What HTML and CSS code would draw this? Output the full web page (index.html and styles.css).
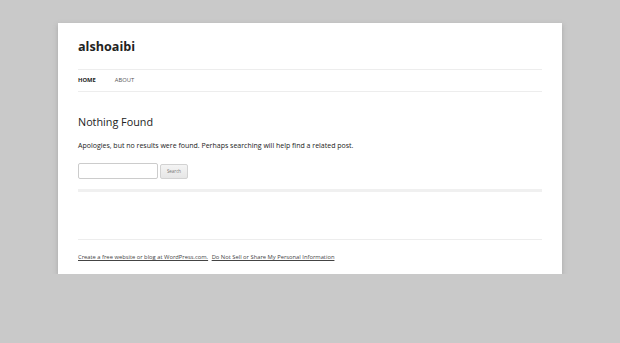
FILE: index.html
```html
<!DOCTYPE html>
<html lang="en">
<head>
    <meta charset="UTF-8">
    <meta name="viewport" content="width=device-width, initial-scale=1.0">
    <title>alshoaibi</title>
    <link rel="stylesheet" href="styles.css">
</head>
<body>

    <div class="site">
        <!-- Header and Navigation -->
        <header class="site-header">
            <h1 class="site-title"><a href="#">alshoaibi</a></h1>
            <nav class="main-nav">
                <ul>
                    <li class="current"><a href="#">Home</a></li>
                    <li><a href="#">About</a></li>
                </ul>
            </nav>
        </header>

        <!-- Content -->
        <main class="site-content">
            <article class="not-found">
                <h2 class="entry-title">Nothing Found</h2>
                <p>Apologies, but no results were found. Perhaps searching will help find a related post.</p>
                <form class="search-form">
                    <input type="text" class="search-field">
                    <button type="button" class="search-btn">Search</button>
                </form>
            </article>
        </main>

        <!-- Footer -->
        <footer class="site-footer">
            <a href="#">Create a free website or blog at WordPress.com.</a>
            <a href="#">Do Not Sell or Share My Personal Information</a>
        </footer>
    </div>

</body>
</html>
```

FILE: styles.css
```css
/* General Styling */
body {
    font-family: "Open Sans", "Liberation Sans", sans-serif;
    margin: 0;
    padding: 23px 0 0;
    background-color: #c9c9c9;
    color: #333;
}

a {
    color: #444;
}

.site {
    width: 464px;
    margin: 0 auto;
    padding: 0 20px;
    background-color: #fff;
    box-shadow: 0 2px 5px rgba(100, 100, 100, 0.35);
}

/* Header and Navigation */
.site-header {
    padding-top: 14px;
}

.site-title {
    margin: 0;
    font-size: 12.6px;
    font-weight: 700;
    line-height: 20px;
}

.site-title a {
    color: #222;
    text-decoration: none;
}

.main-nav {
    margin-top: 12px;
    border-top: 1px solid #ededed;
    border-bottom: 1px solid #ededed;
}

.main-nav ul {
    list-style: none;
    margin: 0;
    padding: 0;
    display: flex;
    gap: 19px;
}

.main-nav li a {
    display: block;
    font-size: 5.8px;
    line-height: 21px;
    text-transform: uppercase;
    text-decoration: none;
    color: #555;
}

.main-nav li.current a {
    color: #222;
    font-weight: 700;
}

/* Content */
.site-content {
    padding-top: 20px;
}

.not-found {
    padding-bottom: 10px;
    border-bottom: 3px solid #f0f0f0;
}

.entry-title {
    margin: 0;
    font-size: 10.8px;
    font-weight: 400;
    line-height: 20px;
    color: #222;
}

.not-found p {
    margin: 7px 0 0;
    font-size: 7px;
    line-height: 14px;
    color: #222;
}

.search-form {
    display: flex;
    align-items: center;
    gap: 2px;
    margin-top: 10px;
}

.search-field {
    box-sizing: border-box;
    width: 80px;
    height: 16px;
    margin: 0;
    padding: 0 4px;
    border: 1px solid #ccc;
    border-radius: 2px;
    background: #fff;
}

.search-btn {
    box-sizing: border-box;
    width: 28px;
    height: 15px;
    margin: 0;
    padding: 0;
    font-family: "Open Sans", "Liberation Sans", sans-serif;
    font-size: 4.5px;
    color: #777;
    background: linear-gradient(#f4f4f4, #e6e6e6);
    border: 1px solid #d2d2d2;
    border-radius: 2px;
}

/* Footer */
.site-footer {
    margin-top: 47px;
    border-top: 1px solid #ededed;
    padding: 11px 0 11px;
    font-size: 5.8px;
    line-height: 12px;
}

.site-footer a {
    color: #444;
    margin-right: 2px;
}
```
